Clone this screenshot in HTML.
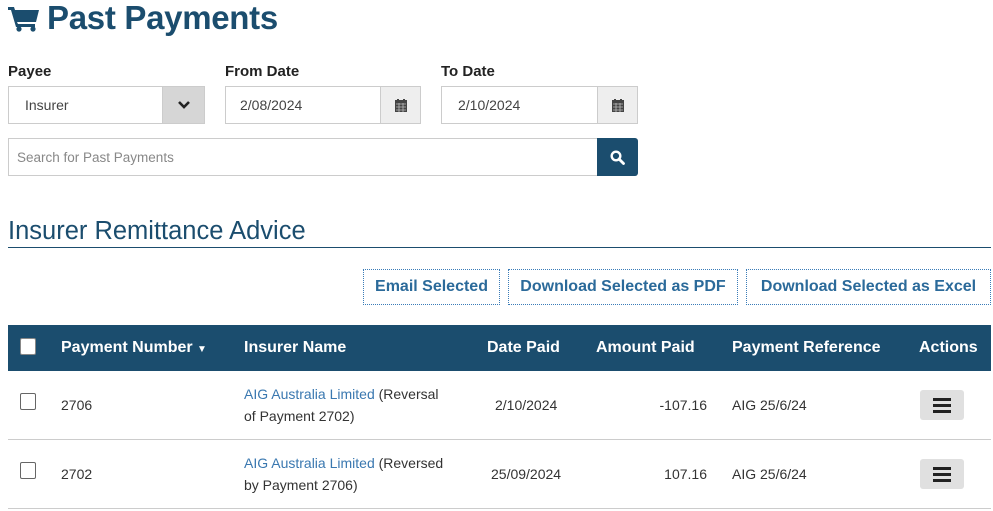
<!DOCTYPE html>
<html><head><meta charset="utf-8"><style>
*{box-sizing:border-box;margin:0;padding:0}
body{width:993px;height:511px;overflow:hidden;background:#fff;font-family:"Liberation Sans",sans-serif;color:#333;position:relative}
.a{position:absolute}
h1{position:absolute;left:47px;top:-1px;font-size:33px;font-weight:bold;color:#1b4d6e;letter-spacing:-0.3px}
.lbl{position:absolute;top:63px;font-size:15px;font-weight:bold;color:#222}
.box{position:absolute;border:1px solid #ccc;background:#fff;font-size:14px;color:#444}
.addon{position:absolute;top:0;right:0;bottom:0;background:#eee;border-left:1px solid #ccc;display:flex;align-items:center;justify-content:center}
.btn{position:absolute;top:269px;height:36px;border:1px dotted #3a7cb8;font-size:16px;font-weight:bold;color:#2b6a9a;display:flex;align-items:center;justify-content:center}
.th{position:absolute;top:339px;font-size:16px;font-weight:bold;color:#fff}
.td{position:absolute;font-size:14px;color:#333;line-height:22px}
.cb{position:absolute;width:16px;height:17px;border:1px solid #666;border-radius:2px;background:#fff}
.menu{position:absolute;left:920px;width:44px;height:30px;background:#e0e0e0;border-radius:3px;display:flex;flex-direction:column;align-items:center;justify-content:center;gap:3px}
.menu i{display:block;width:18px;height:3px;background:#222}
a{color:#3a78b0;text-decoration:none}
</style></head><body>
<svg class="a" style="left:8px;top:6px" width="32" height="26" viewBox="0 0 32 26"><path d="M0 1h6l1 3h24l-3 12H9l1 2h17v3H8L3 4H0z" fill="#1b4d6e"/><circle cx="11" cy="23" r="2.6" fill="#1b4d6e"/><circle cx="25" cy="23" r="2.6" fill="#1b4d6e"/></svg>
<h1>Past Payments</h1>
<div class="lbl" style="left:8px">Payee</div>
<div class="lbl" style="left:225px">From Date</div>
<div class="lbl" style="left:441px">To Date</div>
<div class="box" style="left:8px;top:86px;width:197px;height:38px;padding:10px 16px">Insurer<div class="addon" style="width:42px;background:#d6d6d6"><svg width="14" height="10" viewBox="0 0 14 10"><path d="M2 2l5 5 5-5" stroke="#222" stroke-width="2.6" fill="none"/></svg></div></div>
<div class="box" style="left:225px;top:86px;width:196px;height:38px;padding:10px 14px">2/08/2024<div class="addon" style="width:40px"><svg width="12" height="13" viewBox="0 0 12 13"><rect x="0" y="1" width="12" height="12" fill="#444"/><rect x="2" y="0" width="2" height="3" fill="#444"/><rect x="8" y="0" width="2" height="3" fill="#444"/><path d="M1 5h10M1 8h10M1 11h10M4 4v9M8 4v9" stroke="#bbb" stroke-width=".8"/></svg></div></div>
<div class="box" style="left:441px;top:86px;width:197px;height:38px;padding:10px 16px">2/10/2024<div class="addon" style="width:40px"><svg width="12" height="13" viewBox="0 0 12 13"><rect x="0" y="1" width="12" height="12" fill="#444"/><rect x="2" y="0" width="2" height="3" fill="#444"/><rect x="8" y="0" width="2" height="3" fill="#444"/><path d="M1 5h10M1 8h10M1 11h10M4 4v9M8 4v9" stroke="#bbb" stroke-width=".8"/></svg></div></div>
<div class="box" style="left:8px;top:138px;width:590px;height:38px;padding:11px 8px;color:#888;font-size:13.5px">Search for Past Payments</div>
<div class="a" style="left:597px;top:138px;width:41px;height:38px;background:#1b4d6e;border-radius:0 3px 3px 0;display:flex;align-items:center;justify-content:center"><svg width="15" height="15" viewBox="0 0 15 15"><circle cx="6" cy="6" r="4.3" stroke="#fff" stroke-width="2.4" fill="none"/><path d="M9 9l4.5 4.5" stroke="#fff" stroke-width="2.8" stroke-linecap="round"/></svg></div>
<div class="a" style="left:8px;top:217px;font-size:25.5px;color:#1b4d6e">Insurer Remittance Advice</div>
<div class="a" style="left:8px;top:247px;width:983px;height:1px;background:#1b4d6e"></div>
<div class="btn" style="left:363px;width:137px">Email Selected</div>
<div class="btn" style="left:508px;width:230px">Download Selected as PDF</div>
<div class="btn" style="left:746px;width:245px">Download Selected as Excel</div>
<div class="a" style="left:8px;top:325px;width:983px;height:46px;background:#1b4d6e"></div>
<div class="cb" style="left:20px;top:338px;border-color:#888"></div>
<div class="th" style="left:61px">Payment Number <span style="font-size:10px">▼</span></div>
<div class="th" style="left:244px">Insurer Name</div>
<div class="th" style="left:487px">Date Paid</div>
<div class="th" style="left:596px">Amount Paid</div>
<div class="th" style="left:732px">Payment Reference</div>
<div class="th" style="left:919px">Actions</div>
<div class="a" style="left:8px;top:439px;width:983px;height:1px;background:#ccc"></div>
<div class="a" style="left:8px;top:508px;width:983px;height:1px;background:#ccc"></div>
<div class="cb" style="left:20px;top:393px"></div>
<div class="td" style="left:61px;top:394px">2706</div>
<div class="td" style="left:244px;top:383px"><a>AIG Australia Limited</a> (Reversal<br>of Payment 2702)</div>
<div class="td" style="left:495px;top:394px">2/10/2024</div>
<div class="td" style="left:600px;top:394px;width:107px;text-align:right">-107.16</div>
<div class="td" style="left:732px;top:394px">AIG 25/6/24</div>
<div class="menu" style="top:390px"><i></i><i></i><i></i></div>
<div class="cb" style="left:20px;top:462px"></div>
<div class="td" style="left:61px;top:463px">2702</div>
<div class="td" style="left:244px;top:452px"><a>AIG Australia Limited</a> (Reversed<br>by Payment 2706)</div>
<div class="td" style="left:491px;top:463px">25/09/2024</div>
<div class="td" style="left:600px;top:463px;width:107px;text-align:right">107.16</div>
<div class="td" style="left:732px;top:463px">AIG 25/6/24</div>
<div class="menu" style="top:459px"><i></i><i></i><i></i></div>
</body></html>
